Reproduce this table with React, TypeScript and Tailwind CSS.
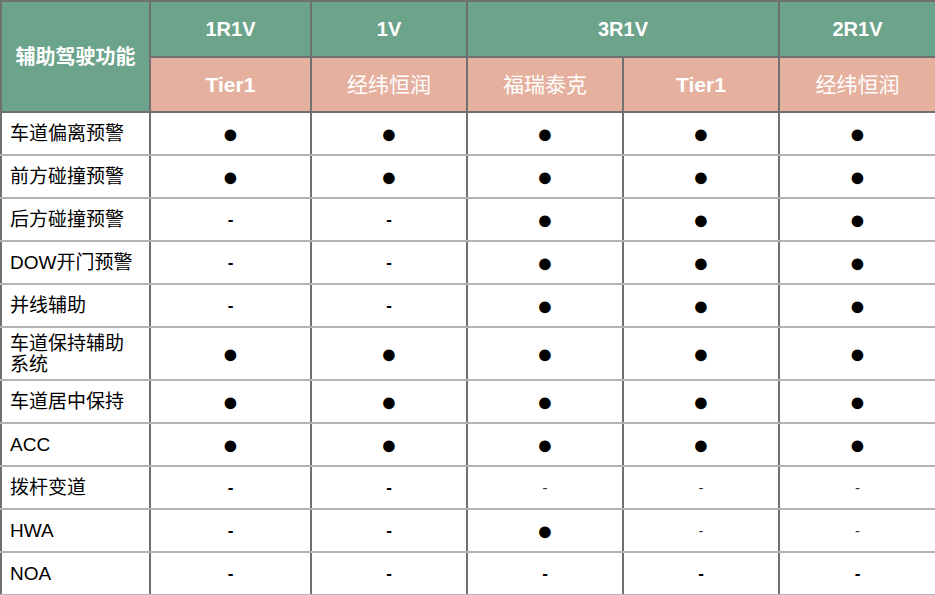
const subHeads = [
  { label: "Tier1", bold: true },
  { label: "经纬恒润", bold: false },
  { label: "福瑞泰克", bold: false },
  { label: "Tier1", bold: true },
  { label: "经纬恒润", bold: false },
];

// "o" = dot, "d" = bold dash, "t" = thin dash
const rows: { name: string; cells: string; tall?: boolean }[] = [
  { name: "车道偏离预警", cells: "ooooo" },
  { name: "前方碰撞预警", cells: "ooooo" },
  { name: "后方碰撞预警", cells: "ddooo" },
  { name: "DOW开门预警", cells: "ddooo" },
  { name: "并线辅助", cells: "ddooo" },
  { name: "车道保持辅助系统", cells: "ooooo", tall: true },
  { name: "车道居中保持", cells: "ooooo" },
  { name: "ACC", cells: "ooooo" },
  { name: "拨杆变道", cells: "ddttt" },
  { name: "HWA", cells: "ddott" },
  { name: "NOA", cells: "ddddd" },
];

function Mark({ kind }: { kind: string }) {
  if (kind === "o")
    return <span className="inline-block text-[27px] leading-[20px] h-[20px] align-middle">●</span>;
  if (kind === "d") return <span className="text-[17px] leading-[20px] font-bold">-</span>;
  return <span className="text-[15px] leading-[20px] text-[#333]">-</span>;
}

export default function App() {
  const head = "border-2 border-[#707070] text-white text-[20px] font-bold text-center";
  return (
    <div className="w-[935px] h-[595px] bg-white font-['Liberation_Sans','Noto_Sans_CJK_SC',sans-serif]">
      <table className="w-[935px] table-fixed border-collapse">
        <colgroup>
          <col className="w-[149px]" />
          <col className="w-[161px]" />
          <col className="w-[156px]" />
          <col className="w-[156px]" />
          <col className="w-[156px]" />
          <col className="w-[157px]" />
        </colgroup>
        <thead>
          <tr className="h-[56px] bg-[#6ca38b]">
            <th rowSpan={2} className={head}>
              辅助驾驶功能
            </th>
            <th className={head}>1R1V</th>
            <th className={head}>1V</th>
            <th colSpan={2} className={head}>
              3R1V
            </th>
            <th className={head}>2R1V</th>
          </tr>
          <tr className="h-[55px] bg-[#e5b09e]">
            {subHeads.map((s, i) => (
              <th
                key={i}
                className={`border-2 border-[#707070] text-white text-[21px] text-center ${
                  s.bold ? "font-bold" : "font-normal"
                }`}
              >
                {s.label}
              </th>
            ))}
          </tr>
        </thead>
        <tbody>
          {rows.map((r) => (
            <tr key={r.name} className={r.tall ? "h-[53px]" : "h-[43px]"}>
              <td className="border-y-2 border-y-[#b4b4b4] border-x-2 border-x-[#707070] pl-[8px] pr-2 text-[19px] leading-[21px] text-black">
                {r.name}
              </td>
              {r.cells.split("").map((c, i) => (
                <td
                  key={i}
                  className="border-y-2 border-y-[#b4b4b4] border-x-2 border-x-[#707070] text-center align-middle leading-[20px]"
                >
                  <Mark kind={c} />
                </td>
              ))}
            </tr>
          ))}
        </tbody>
      </table>
    </div>
  );
}
